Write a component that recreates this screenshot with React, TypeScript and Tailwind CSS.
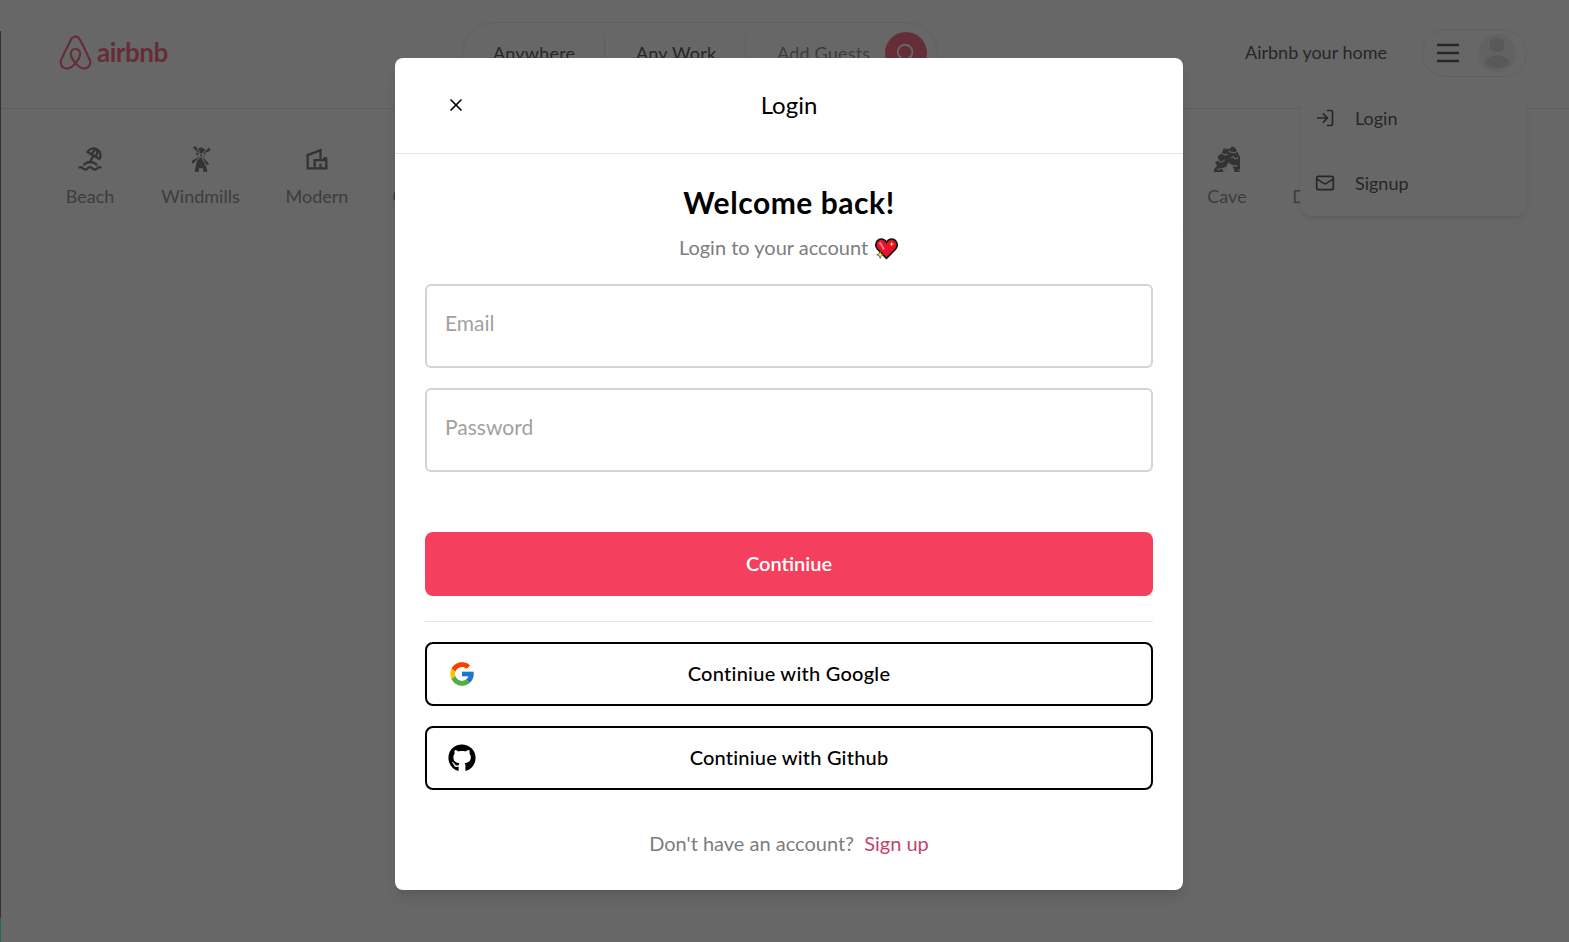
import { FaAirbnb, FaGithub, FaSkiing } from "react-icons/fa";
import { FcGoogle } from "react-icons/fc";
import { TbBeach, TbMountain, TbPool } from "react-icons/tb";
import { GiWindmill, GiIsland, GiBoatFishing, GiCastle, GiCaveEntrance, GiCactus, GiBarn, GiForestCamp } from "react-icons/gi";
import { MdOutlineVilla } from "react-icons/md";
import { BsSnow } from "react-icons/bs";
import { IoDiamond } from "react-icons/io5";
import { Search, X, LogIn, Mail } from "lucide-react";

const cats = [
  { label: "Beach", Icon: TbBeach, w: "w-[48px]" },
  { label: "Windmills", Icon: GiWindmill, w: "w-[81px]" },
  { label: "Modern", Icon: MdOutlineVilla, w: "w-[60px]" },
  { label: "Countryside", Icon: TbMountain, w: "w-[95px]" },
  { label: "Pools", Icon: TbPool, w: "w-[45px]" },
  { label: "Islands", Icon: GiIsland, w: "w-[56px]" },
  { label: "Lake", Icon: GiBoatFishing, w: "w-[40px]" },
  { label: "Skiing", Icon: FaSkiing, w: "w-[50px]" },
  { label: "Castles", Icon: GiCastle, w: "w-[53px]" },
  { label: "Camping", Icon: GiForestCamp, w: "w-[64px]" },
  { label: "Arctic", Icon: BsSnow, w: "w-[44px]" },
  { label: "Cave", Icon: GiCaveEntrance, w: "w-[38px]" },
  { label: "Desert", Icon: GiCactus, w: "w-[54px]" },
  { label: "Barns", Icon: GiBarn, w: "w-[44px]" },
  { label: "Lux", Icon: IoDiamond, w: "w-[30px]" },
];

function Heart() {
  return (
    <svg width="25" height="23" viewBox="0 0 24 22" className="mt-[2px] inline-block">
      <path d="M12 20.500 3.200 11.500C.8 8.800 1.400 4.600 4.200 2.800 7 1 10.400 2 12 5c1.600-3 5-4 7.800-2.200 2.800 1.800 3.400 6 1 8.700L12 20.500Z" fill="#e8112d" stroke="#111" strokeWidth="1.6" />
      <path d="M5.500 5c1 2.500 3 4 4 7" stroke="#f7746f" strokeWidth="2.200" fill="none" />
      <path d="M17 4.500l.6 1.600 1.600.6-1.600.6-.6 1.600-.6-1.600-1.600-.6 1.600-.6Z" fill="#ffdf3a" />
      <path d="M6 13.500l1 2.500 2.500 1-2.500 1-1 2.500-1-2.500-2.500-1 2.500-1Z" fill="#ffdf3a" stroke="#111" strokeWidth=".5" />
    </svg>
  );
}

export default function App() {
  return (
    <div className="relative h-[942px] overflow-hidden bg-white font-['Lato','Liberation_Sans',sans-serif] text-neutral-800">
      <header className="flex h-[109px] items-center border-b border-neutral-200 pb-[3px] pl-[59px] pr-[42px]">
        <div className="flex w-[403px] items-center gap-[3px] text-[#f43f5e]">
          <FaAirbnb className="-ml-[2px] h-[39px] w-[37px]" />
          <span className="pb-[2px] text-[26px] font-bold leading-none tracking-[-0.5px]">airbnb</span>
        </div>
        <div className="flex h-[62px] w-[476px] items-center rounded-full border border-neutral-200 pl-[30px] pr-[10px] text-[18px] tracking-[0.2px]">
          <span className="w-[112px] border-r border-neutral-200 leading-[34px]">Anywhere</span>
          <span className="w-[141px] border-r border-neutral-200 pl-[31px] leading-[34px]">Any Work</span>
          <span className="pl-[31px] leading-[34px] text-neutral-500">Add Guests</span>
          <span className="ml-auto flex h-[42px] w-[42px] items-center justify-center rounded-full bg-[#f43f5e] text-white">
            <Search size={22} />
          </span>
        </div>
        <div className="ml-auto flex items-center gap-[35px]">
          <span className="text-[18px]">Airbnb your home</span>
          <div className="flex h-[48px] w-[105px] items-center justify-between rounded-full border border-neutral-200 pl-[14px] pr-[9px]">
            <svg width="22" height="20" viewBox="0 0 22 20">
              <path d="M0 2h22M0 10h22M0 18h22" stroke="currentColor" strokeWidth="2.500" />
            </svg>
            <span className="flex h-[40px] w-[40px] items-center justify-center rounded-full">
              <svg width="40" height="40" viewBox="0 0 40 40">
                <circle cx="20" cy="20" r="19" fill="#ededed" />
                <circle cx="20" cy="12" r="7.500" fill="#cfcfcf" />
                <ellipse cx="20" cy="29" rx="12" ry="6.500" fill="#cfcfcf" />
              </svg>
            </span>
          </div>
        </div>
      </header>
      <nav className="flex h-[118px] items-center gap-[46px] border-b border-neutral-100 pl-[66px] pt-[17px]">
        {cats.map(({ label, Icon, w }) => (
          <div key={label} className={`${w} flex shrink-0 flex-col items-center gap-[11px] text-neutral-500`}>
            <Icon size={28} className="text-neutral-600" />
            <span className="whitespace-nowrap text-[18px] leading-[24px]">{label}</span>
          </div>
        ))}
      </nav>
      <div className="absolute right-[42px] top-[93px] flex w-[227px] flex-col gap-[15px] rounded-xl bg-white pb-[8px] shadow-md">
        <div className="flex h-[50px] items-center gap-[20px] pl-[15px] text-[18px]"><LogIn size={20} />Login</div>
        <div className="flex h-[50px] items-center gap-[20px] pl-[15px] text-[18px]"><Mail size={20} />Signup</div>
      </div>
      <div className="absolute inset-0 flex items-start justify-center bg-neutral-800/70 pl-[9px] pt-[58px]">
        <div className="w-[788px] rounded-lg bg-white shadow-lg">
          <div className="relative flex h-[96px] items-center justify-center border-b border-neutral-200 text-black">
            <X size={20} className="absolute left-[51px] top-[37px]" />
            <span className="pb-[2px] text-[24px]">Login</span>
          </div>
          <div className="flex flex-col px-[30px] pb-[33px]">
            <h2 className="mt-[28px] text-center text-[30px] font-bold leading-[40px] tracking-[0.55px] text-black">Welcome back!</h2>
            <p className="mt-[11px] flex items-center justify-center gap-[6px] text-[20px] leading-[28px] text-[#7d7d7d]">Login to your account <Heart /></p>
            <div className="mt-[23px] flex h-[84px] items-center rounded-md border-2 border-neutral-300 px-[18px] pb-[6px] text-[21px] text-neutral-400">Email</div>
            <div className="mt-[20px] flex h-[84px] items-center rounded-md border-2 border-neutral-300 px-[18px] pb-[6px] text-[21px] text-neutral-400">Password</div>
            <button className="mt-[60px] h-[64px] rounded-lg bg-[#f43f5e] pb-[2px] text-[20px] font-semibold text-white">Continiue</button>
            <hr className="mt-[25px] border-neutral-200" />
            <button className="relative mt-[20px] flex h-[64px] items-center justify-center rounded-lg border-2 border-black pb-[2px] text-[20px] font-medium tracking-[0.25px] text-black">
              <FcGoogle size={28} className="absolute left-[21px] top-[16px]" />Continiue with Google
            </button>
            <button className="relative mt-[20px] flex h-[64px] items-center justify-center rounded-lg border-2 border-black pb-[2px] text-[20px] font-medium tracking-[0.2px] text-black">
              <FaGithub size={28} className="absolute left-[21px] top-[16px]" />Continiue with Github
            </button>
            <p className="mt-[39px] text-center text-[20px] leading-[28px] text-[#7d7d7d]">Don't have an account? <span className="ml-[5px] text-[#c2456a]">Sign up</span></p>
          </div>
        </div>
      </div>
      <div className="absolute bottom-0 left-0 top-[31px] flex w-px flex-col">
        <div className="flex-1 bg-[#333333]" />
        <div className="h-[24px] bg-[#1f6b55]" />
      </div>
    </div>
  );
}
